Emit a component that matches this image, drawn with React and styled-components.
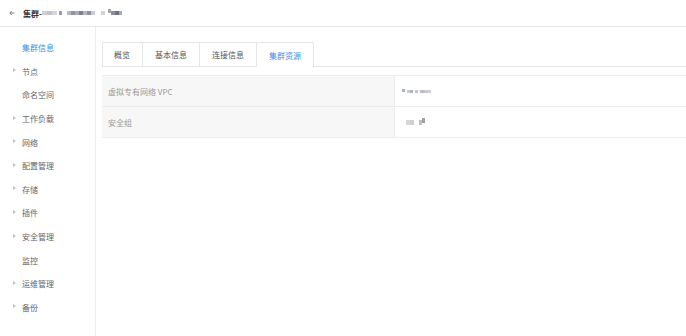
import { styled, createGlobalStyle } from "styled-components";

const GlobalStyle = createGlobalStyle`
    html, body {
        margin: 0;
        padding: 0;
        background: #fff;
        font-family: "Noto Sans CJK SC", "Noto Sans", sans-serif;
    }
`;

const Page = styled.div`
    width: 686px;
    height: 336px;
    overflow: hidden;
    display: flex;
    flex-direction: column;
    color: #666;
    font-size: 8px;
`;

const Header = styled.header`
    height: 26px;
    flex: none;
    border-bottom: 1px solid #e6e6e6;
    display: flex;
    align-items: center;
    padding-left: 9px;
    gap: 8px;
`;

const Back = styled.svg`
    width: 6px;
    height: 6px;
`;

const Title = styled.div`
    display: flex;
    align-items: center;
    font-weight: bold;
    color: #333;
    font-size: 8px;
`;

const Mosaic = styled.span`
    display: inline-flex;
    align-items: center;
    margin-left: ${(p) => p.$ml || 0}px;
`;

const Cell = styled.i`
    display: block;
    width: ${(p) => p.$w || 3}px;
    height: ${(p) => p.$h || 3}px;
    margin-top: ${(p) => p.$dy || 0}px;
    background: ${(p) => p.$c};
    filter: blur(0.4px);
`;

const Body = styled.div`
    flex: 1;
    display: flex;
`;

const Sidebar = styled.nav`
    width: 95px;
    flex: none;
    border-right: 1px solid #ececec;
    padding-top: 9px;
    display: flex;
    flex-direction: column;
`;

const NavItem = styled.div`
    position: relative;
    height: 23.6px;
    display: flex;
    align-items: center;
    padding-left: 22px;
    color: ${(p) => (p.$active ? "#3d8ee0" : "#666")};
    &::before {
        content: "";
        display: ${(p) => (p.$caret ? "block" : "none")};
        position: absolute;
        left: 13px;
        top: 50%;
        margin-top: -3px;
        border-left: 3px solid #c4c4c4;
        border-top: 2.5px solid transparent;
        border-bottom: 2.5px solid transparent;
    }
`;

const Main = styled.main`
    flex: 1;
    padding: 15px 0 0 6px;
`;

const TabBar = styled.div`
    display: flex;
    border-bottom: 1px solid #e6e6e6;
    height: 24px;
`;

const Tab = styled.div`
    padding: 0 12px 0 ${(p) => (p.$first ? 11 : 12)}px;
    display: flex;
    align-items: center;
    border: 1px solid #e6e6e6;
    border-left-width: ${(p) => (p.$first ? 1 : 0)}px;
    border-bottom: ${(p) => (p.$active ? "1px solid #fff" : "0")};
    height: ${(p) => (p.$active ? 24 : 23)}px;
    border-radius: ${(p) => (p.$active ? "2px 2px 0 0" : "0")};
    color: ${(p) => (p.$active ? "#3d8ee0" : "#555")};
    background: #fff;
`;

const Table = styled.div`
    margin-top: 8px;
    border-top: 1px solid #ececec;
`;

const Row = styled.div`
    display: grid;
    grid-template-columns: 293px 1fr;
    height: 30px;
    border-bottom: 1px solid #ececec;
`;

const Label = styled.div`
    background: #f7f7f7;
    border-right: 1px solid #ececec;
    display: flex;
    align-items: center;
    padding-left: 6px;
    color: #999;
`;

const Value = styled.div`
    display: flex;
    align-items: center;
    padding-left: 7px;
`;

const navItems = [
    { label: "集群信息", active: true },
    { label: "节点", caret: true },
    { label: "命名空间" },
    { label: "工作负载", caret: true },
    { label: "网络", caret: true },
    { label: "配置管理", caret: true },
    { label: "存储", caret: true },
    { label: "插件", caret: true },
    { label: "安全管理", caret: true },
    { label: "监控" },
    { label: "运维管理", caret: true },
    { label: "备份", caret: true },
];

const tabs = ["概览", "基本信息", "连接信息", "集群资源"];

// pixelated part of the cluster name: [width, colour, offset]
const titleBlur = [
    [5, "#d0d0d6"], [5, "#c4c4cc"], [5, "#d6d6dc"], [2, "#fff"], [3, "#9c9ca6"],
    [5, "#fff"], [4, "#b8b8c2"], [4, "#8f93a3"], [4, "#a9adba"], [4, "#7d8191"],
    [4, "#b3b6c2"], [4, "#8e92a2"], [4, "#c9cbd3"], [6, "#fff"], [4, "#d2d2d8"],
    [3, "#fff"], [3, "#a8a4a0", -4], [4, "#8a8e9a"], [4, "#6f7484"], [3, "#a7abb6"],
];

const Blur = ({ cells, ml, h }) => (
    <Mosaic $ml={ml}>
        {cells.map(([w, c, dy], i) => (
            <Cell key={i} $w={w} $h={h} $c={c} $dy={dy} />
        ))}
    </Mosaic>
);

export default function App() {
    return (
        <Page>
            <GlobalStyle />
            <Header>
                <Back viewBox="0 0 6 6">
                    <path d="M5.5 3H0.8M2.8 1L0.8 3l2 2" stroke="#777" strokeWidth="0.9" fill="none" />
                </Back>
                <Title>
                    集群-
                    <Blur cells={titleBlur} h={4} />
                </Title>
            </Header>
            <Body>
                <Sidebar>
                    {navItems.map((n) => (
                        <NavItem key={n.label} $active={n.active} $caret={n.caret}>
                            {n.label}
                        </NavItem>
                    ))}
                </Sidebar>
                <Main>
                    <TabBar>
                        {tabs.map((t, i) => (
                            <Tab key={t} $first={i === 0} $active={i === 3}>
                                {t}
                            </Tab>
                        ))}
                    </TabBar>
                    <Table>
                        <Row>
                            <Label>虚拟专有网络 VPC</Label>
                            <Value>
                                <Blur
                                    h={3}
                                    cells={[
                                        [3, "#a8b0c0", -2], [2, "#fff"], [3, "#c8ccd8"], [3, "#b0b6c4"],
                                        [2, "#fff"], [3, "#c4c6cc"], [2, "#fff"], [4, "#bcbec4"],
                                        [4, "#c6c8ce"], [3, "#d0d2d8"],
                                    ]}
                                />
                            </Value>
                        </Row>
                        <Row>
                            <Label>安全组</Label>
                            <Value>
                                <Blur
                                    h={5}
                                    ml={4}
                                    cells={[
                                        [4, "#d8d8dc"], [4, "#cfcfd4"], [5, "#fff"], [3, "#c4c0b8"],
                                        [3, "#9aa2ae", -3],
                                    ]}
                                />
                            </Value>
                        </Row>
                    </Table>
                </Main>
            </Body>
        </Page>
    );
}
